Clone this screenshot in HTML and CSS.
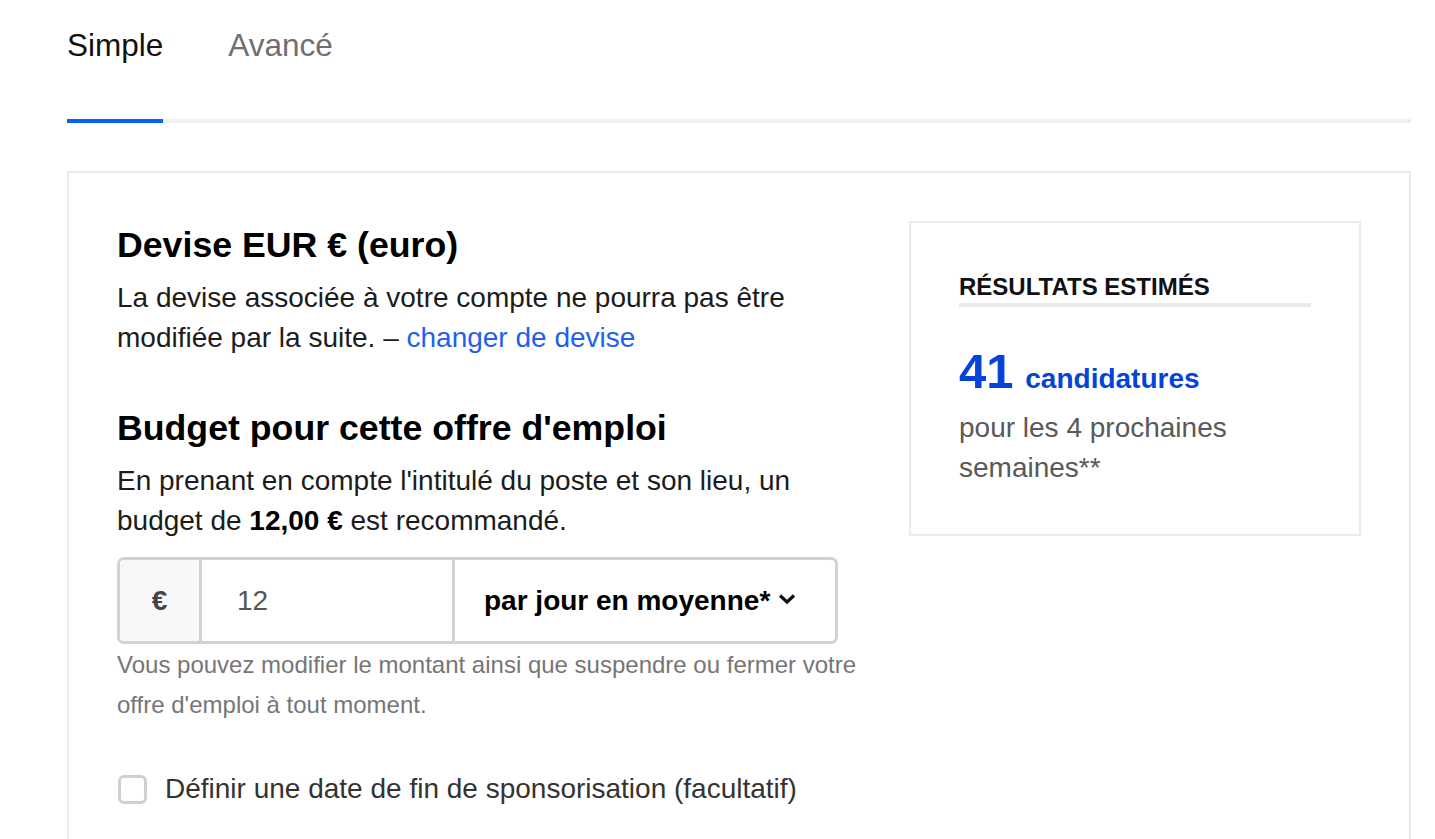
FILE: index.html
```html
<!DOCTYPE html>
<html lang="fr">
<head>
    <meta charset="UTF-8">
    <meta name="viewport" content="width=device-width, initial-scale=1.0">
    <title>Budget de l'offre d'emploi</title>
    <link rel="stylesheet" href="styles.css">
</head>
<body>
    <div class="page">
        <nav class="tabs">
            <div class="tab active">Simple</div>
            <div class="tab">Avancé</div>
        </nav>

        <div class="card">
            <div class="form-col">
                <h2>Devise EUR € (euro)</h2>
                <p class="text">La devise associée à votre compte ne pourra pas être modifiée par la suite. – <a href="#" class="link">changer de devise</a></p>

                <h2 class="section">Budget pour cette offre d'emploi</h2>
                <p class="text">En prenant en compte l'intitulé du poste et son lieu, un budget de <strong>12,00 €</strong> est recommandé.</p>

                <div class="budget-group">
                    <div class="prefix">€</div>
                    <input class="amount" type="text" value="12">
                    <div class="period">
                        <span>par jour en moyenne*</span>
                        <svg class="chevron" width="18" height="12" viewBox="0 0 18 12">
                            <path d="M2 2.5 L9 9 L16 2.5" fill="none" stroke="#111" stroke-width="3.2"/>
                        </svg>
                    </div>
                </div>
                <p class="hint">Vous pouvez modifier le montant ainsi que suspendre ou fermer votre offre d'emploi à tout moment.</p>

                <label class="check">
                    <span class="box"></span>
                    Définir une date de fin de sponsorisation (facultatif)
                </label>
            </div>

            <div class="results">
                <div class="results-title">RÉSULTATS ESTIMÉS</div>
                <div class="results-count">41<span> candidatures</span></div>
                <p class="results-note">pour les 4 prochaines semaines**</p>
            </div>
        </div>
    </div>
</body>
</html>
```

FILE: styles.css
```css
body {
    margin: 0;
    font-family: "Liberation Sans", Arial, sans-serif;
    color: #1c1c1c;
    background: #fff;
}

.page {
    padding: 0 24px 0 67px;
}

.tabs {
    display: flex;
    gap: 65px;
    padding-top: 22px;
    border-bottom: 4px solid #f0f0f0;
}

.tab {
    font-size: 31.5px;
    line-height: 47px;
    color: #6f6f6f;
    padding-bottom: 50px;
    margin-bottom: -4px;
    border-bottom: 4px solid transparent;
}

.tab.active {
    color: #111;
    border-bottom-color: #0a60ff;
}

.card {
    margin-top: 48px;
    border: 2px solid #ebebeb;
    padding: 48px 48px 60px;
    display: flex;
    justify-content: space-between;
    align-items: flex-start;
}

.form-col {
    width: 750px;
}

h2 {
    margin: 0;
    font-size: 35.7px;
    line-height: 48px;
    color: #000;
}

h2.section {
    margin-top: 46px;
}

.text {
    margin: 9px 0 0;
    font-size: 28px;
    line-height: 40px;
}

.text strong {
    color: #000;
}

.link {
    color: #1f60f0;
    text-decoration: none;
}

.budget-group {
    display: flex;
    width: 721px;
    height: 87px;
    box-sizing: border-box;
    margin-top: 16px;
    border: 3px solid #d2d2d2;
    border-radius: 7px;
    overflow: hidden;
}

.prefix {
    width: 79px;
    background: #f8f8f8;
    border-right: 3px solid #d2d2d2;
    display: flex;
    align-items: center;
    justify-content: center;
    font-size: 28px;
    font-weight: bold;
    color: #444;
}

.amount {
    width: 253px;
    box-sizing: border-box;
    border: none;
    border-right: 3px solid #d2d2d2;
    padding: 0 0 0 35px;
    font-family: inherit;
    font-size: 28px;
    color: #555;
    outline: none;
}

.period {
    flex: 1;
    display: flex;
    align-items: center;
    gap: 8px;
    padding-left: 29px;
    font-size: 28px;
    font-weight: bold;
    color: #000;
}

.chevron {
    margin-top: -4px;
}

.hint {
    margin: 1px 0 0;
    font-size: 24px;
    line-height: 40px;
    color: #767676;
}

.check {
    display: flex;
    align-items: center;
    gap: 18px;
    margin-top: 44px;
    font-size: 28px;
    line-height: 40px;
    color: #333;
}

.box {
    width: 29px;
    height: 29px;
    box-sizing: border-box;
    margin-left: 1px;
    border: 3px solid #cfcfcf;
    border-radius: 6px;
}

.results {
    width: 452px;
    box-sizing: border-box;
    border: 2px solid #ebebeb;
    padding: 48px 48px 46px;
}

.results-title {
    font-size: 24px;
    line-height: 32px;
    font-weight: bold;
    color: #111;
    border-bottom: 4px solid #ebebeb;
}

.results-count {
    margin-top: 36px;
    font-size: 49px;
    line-height: 56px;
    font-weight: bold;
    color: #0445d8;
}

.results-count span {
    margin-left: 4px;
    font-size: 28px;
    line-height: 1;
}

.results-note {
    margin: 9px 0 0;
    font-size: 28px;
    line-height: 40px;
    color: #595959;
}
```
